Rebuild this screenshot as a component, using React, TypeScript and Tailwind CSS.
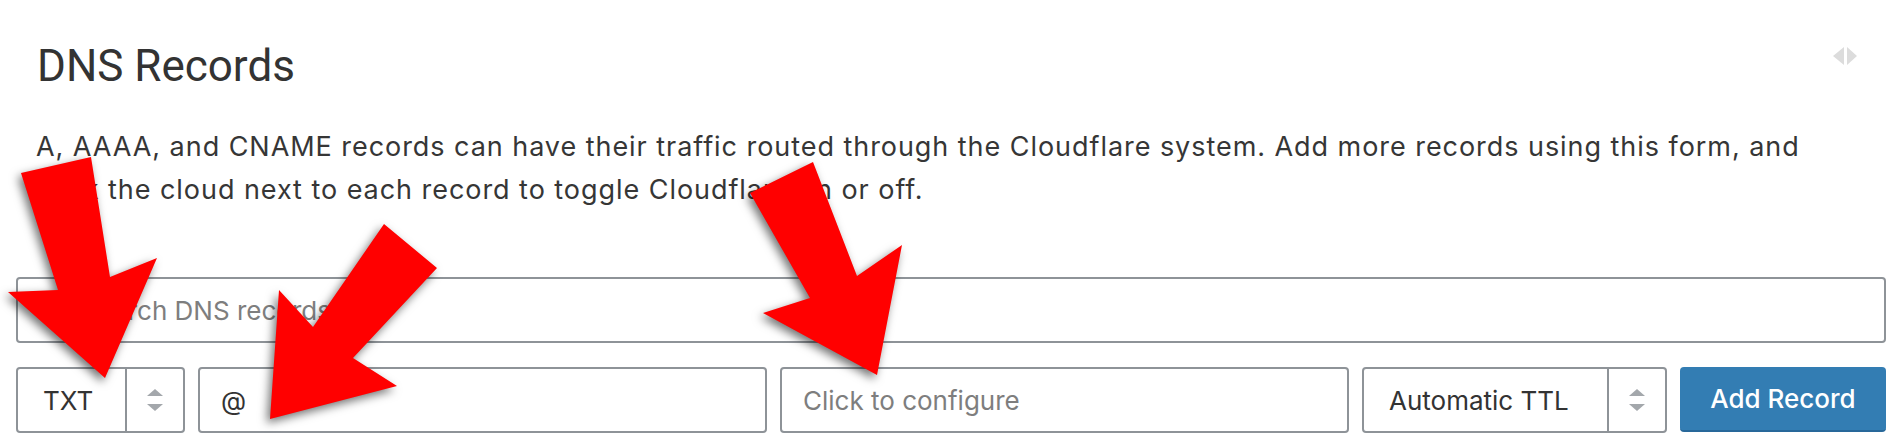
function SelectArrows() {
  return (
    <svg width="16" height="22" viewBox="0 0 16 22" className="shrink-0">
      <polygon points="8,0 16,7 0,7" fill="#a3a7ab" />
      <polygon points="0,15 16,15 8,22" fill="#a3a7ab" />
    </svg>
  );
}

function Select({ value, width, divider }: { value: string; width: string; divider: string }) {
  return (
    <div className={`flex h-[66px] shrink-0 rounded-[4px] border-2 border-[#8e9398] bg-white ${width}`}>
      <div className={`flex items-center pl-[25px] text-[#333] ${divider}`}>{value}</div>
      <div className="flex flex-1 items-center justify-center border-l-2 border-[#8e9398]">
        <SelectArrows />
      </div>
    </div>
  );
}

function TextBox({ value, placeholder }: { value?: string; placeholder?: string }) {
  return (
    <div className="flex h-[66px] w-[569px] shrink-0 items-center rounded-[4px] border-2 border-[#8e9398] bg-white pl-[21px]">
      {value ? (
        <span className="text-[#333]">{value}</span>
      ) : (
        <span className="text-[#7e7e7e]">{placeholder}</span>
      )}
    </div>
  );
}

export default function App() {
  return (
    <div className="relative h-[448px] w-[1902px] overflow-hidden bg-white px-[16px] font-[family-name:Inter,Roboto,Arial,sans-serif] text-[26px] text-[#333]">
      <div className="flex items-start justify-between pl-[21px] pr-[29px] pt-[40px]">
        <h2 className="font-[family-name:Roboto,Arial,sans-serif] text-[44px] leading-[52px] font-normal">DNS Records</h2>
        <svg width="24" height="18" viewBox="0 0 24 18" className="mt-[7px]">
          <polygon points="11,0 11,18 0,9" fill="#dcdcdc" />
          <polygon points="14,0 14,18 24,9" fill="#dcdcdc" />
        </svg>
      </div>

      <p className="mt-[33px] pl-[20px] text-[27px] leading-[43px] tracking-[0.95px] whitespace-nowrap text-[#363636]">
        A, AAAA, and CNAME records can have their traffic routed through the Cloudflare system. Add more records using this form, and
        <br />
        click the cloud next to each record to toggle Cloudflare on or off.
      </p>

      <div className="mt-[66px] flex h-[66px] items-center rounded-[4px] border-2 border-[#8e9398] pl-[63px] text-[#7e7e7e]">
        Search DNS records
      </div>

      <div className="mt-[24px] flex gap-[13px]">
        <Select value="TXT" width="w-[169px]" divider="w-[107px]" />
        <TextBox value="@" />
        <TextBox placeholder="Click to configure" />
        <Select value="Automatic TTL" width="w-[305px]" divider="w-[243px]" />
        <button className="h-[65px] w-[207px] rounded-[4px] border-b-2 border-[#28689a] bg-[#337db3] text-[26px] font-medium text-white">
          Add Record
        </button>
      </div>

      <svg
        width="1902"
        height="448"
        className="pointer-events-none absolute inset-0 [filter:drop-shadow(-3px_4px_5px_rgba(0,0,0,0.55))]"
      >
        <polygon points="21,173 91,157 110,277 157,258 105,378 8,292 58,290" fill="#ff0000" />
        <polygon points="384,224 437,268 353,358 397,386 270,419 279,290 313,327" fill="#ff0000" />
        <polygon points="750,193 813,162 857,276 902,245 877,375 763,313 810,298" fill="#ff0000" />
      </svg>
    </div>
  );
}
